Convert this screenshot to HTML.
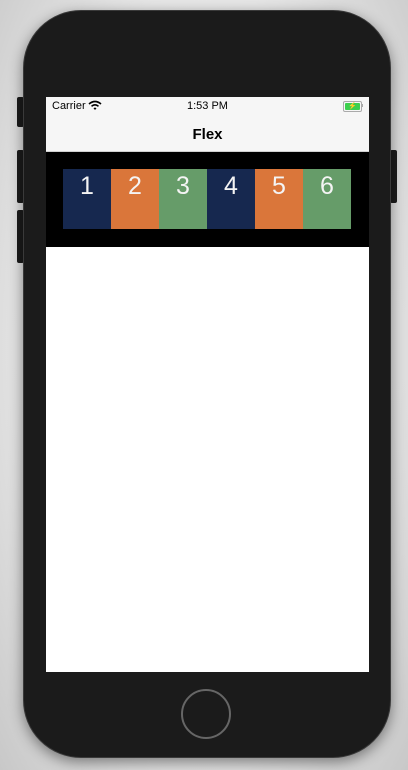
<!DOCTYPE html>
<html><head><style>
html,body{margin:0;padding:0;width:408px;height:770px;overflow:hidden;background:#e4e4e4;font-family:"Liberation Sans",sans-serif}
.bg{position:absolute;inset:0;background:radial-gradient(ellipse at 50% 45%,#f4f4f4 0%,#e6e6e6 60%,#c8c8c8 100%)}
.phone{position:absolute;left:23px;top:10px;width:368px;height:748px;background:#1b1b1b;border-radius:58px;box-shadow:0 4px 14px rgba(0,0,0,.45);border:1px solid #3a3a3a;box-sizing:border-box}
.btn{position:absolute;background:#1b1b1b;border-radius:2px}
.screen{position:absolute;left:46px;top:97px;width:323px;height:575px;background:#fff;overflow:hidden}
.status{height:21px;background:#f6f6f6;position:relative;font-size:11px;color:#000}
.nav{height:34px;background:#f6f6f6;text-align:center;font-size:15px;font-weight:bold;line-height:34px;border-bottom:1px solid #d0d0d0;box-sizing:border-box}
.black{height:95px;background:#000;position:relative}
.boxes{position:absolute;left:17px;top:17px;display:flex}
.boxes div{width:48px;height:60px;color:#f4f4f4;font-size:25px;text-align:center;line-height:34px}
.n{background:#16284f}.o{background:#da763a}.g{background:#669c69}
.home{position:absolute;left:181px;top:689px;width:50px;height:50px;border:2px solid #666;border-radius:50%;box-sizing:border-box}
</style></head><body>
<div class="bg"></div>
<div class="btn" style="left:17px;top:97px;width:7px;height:30px"></div>
<div class="btn" style="left:17px;top:150px;width:7px;height:53px"></div>
<div class="btn" style="left:17px;top:210px;width:7px;height:53px"></div>
<div class="btn" style="left:390px;top:150px;width:7px;height:53px"></div>
<div class="phone"></div>
<div class="screen">
 <div class="status">
  <span style="position:absolute;left:6px;top:3px">Carrier</span>
  <svg style="position:absolute;left:42px;top:3px" width="14" height="11" viewBox="0 0 14 11"><path d="M1 4 Q7 -1 13 4" stroke="#000" stroke-width="1.6" fill="none"/><path d="M3.5 6.3 Q7 3.3 10.5 6.3" stroke="#000" stroke-width="1.6" fill="none"/><path d="M5.5 8.3 L7 10 L8.5 8.3 Q7 7 5.5 8.3Z" fill="#000"/></svg>
  <span style="position:absolute;left:141px;top:3px">1:53 PM</span>
  <div style="position:absolute;left:297px;top:4px;width:15px;height:7px;border:1px solid #aaa;border-radius:2px;padding:1px;box-sizing:content-box"><div style="width:15px;height:7px;background:#3ccf4e;border-radius:1px;color:#000;font-size:7px;line-height:7px;text-align:center">⚡</div></div>
  <div style="position:absolute;left:315px;top:7px;width:2px;height:3px;background:#aaa"></div>
 </div>
 <div class="nav">Flex</div>
 <div class="black"><div class="boxes"><div class="n">1</div><div class="o">2</div><div class="g">3</div><div class="n">4</div><div class="o">5</div><div class="g">6</div></div></div>
</div>
<div class="home"></div>
</body></html>
